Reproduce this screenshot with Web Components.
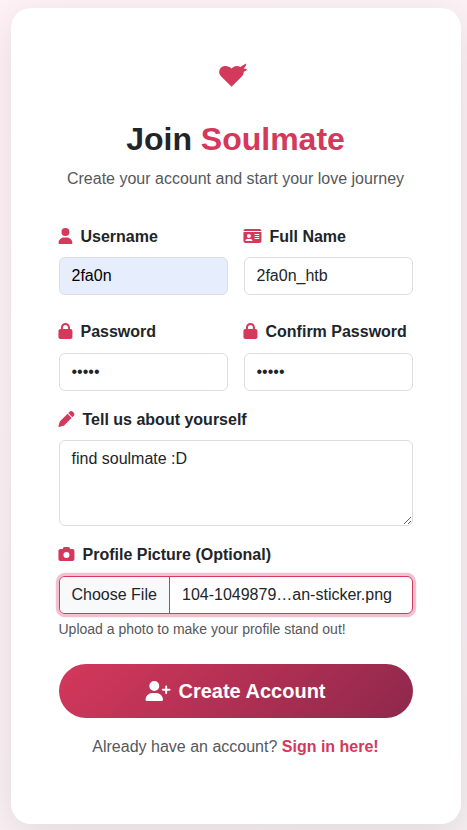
<!DOCTYPE html>
<html lang="en">
<head>
<meta charset="utf-8">
<title>Join Soulmate</title>
<style>
html{height:100%}
body{margin:0;min-height:100%;box-sizing:border-box;overflow:hidden;padding:8px 0 6px 10.5px;background:linear-gradient(135deg,#fff2f6 0%,#f7f0f3 100%);font:16px/24px "Liberation Sans",Arial,sans-serif;color:#212529;--pink:#d4385b}
</style>
</head>
<body>
<signup-card></signup-card>
<script>
const ICONS = {
  user: [448, 'M224 256A128 128 0 1 0 224 0a128 128 0 1 0 0 256zm-45.7 48C79.8 304 0 383.8 0 482.3C0 498.7 13.3 512 29.7 512l388.6 0c16.4 0 29.7-13.3 29.7-29.7C448 383.8 368.2 304 269.7 304l-91.4 0z'],
  card: [576, 'M0 96l576 0c0-35.3-28.7-64-64-64L64 32C28.7 32 0 60.7 0 96zm0 32L0 416c0 35.3 28.7 64 64 64l448 0c35.3 0 64-28.7 64-64l0-288L0 128zM64 405.3c0-29.5 23.9-53.3 53.3-53.3l117.3 0c29.5 0 53.3 23.9 53.3 53.3c0 5.9-4.8 10.7-10.7 10.7L74.7 416c-5.9 0-10.7-4.8-10.7-10.7zM176 192a64 64 0 1 1 0 128 64 64 0 1 1 0-128zm176 16c0-8.8 7.2-16 16-16l128 0c8.8 0 16 7.2 16 16s-7.2 16-16 16l-128 0c-8.8 0-16-7.2-16-16zm0 64c0-8.8 7.2-16 16-16l128 0c8.8 0 16 7.2 16 16s-7.2 16-16 16l-128 0c-8.8 0-16-7.2-16-16zm0 64c0-8.8 7.2-16 16-16l128 0c8.8 0 16 7.2 16 16s-7.2 16-16 16l-128 0c-8.8 0-16-7.2-16-16z'],
  lock: [448, 'M144 144l0 48 160 0 0-48c0-44.2-35.8-80-80-80s-80 35.8-80 80zM80 192l0-48C80 64.5 144.5 0 224 0s144 64.5 144 144l0 48 16 0c35.3 0 64 28.7 64 64l0 192c0 35.3-28.7 64-64 64L64 512c-35.3 0-64-28.7-64-64L0 256c0-35.3 28.7-64 64-64l16 0z'],
  pen: [512, 'M362.7 19.3L314.3 67.7 444.3 197.7l48.4-48.4c25-25 25-65.5 0-90.5L453.3 19.3c-25-25-65.5-25-90.5 0zm-71 71L58.6 323.5c-10.4 10.4-18 23.3-22.2 37.4L1 481.2C-1.5 489.7 .8 498.8 7 505s15.3 8.5 23.7 6.1l120.3-35.4c14.1-4.2 27-11.8 37.4-22.2L421.7 220.3 291.7 90.3z'],
  camera: [512, 'M149.1 64.8L138.7 96 64 96C28.7 96 0 124.7 0 160L0 416c0 35.3 28.7 64 64 64l384 0c35.3 0 64-28.7 64-64l0-256c0-35.3-28.7-64-64-64l-74.7 0L362.9 64.8C356.4 45.2 338.1 32 317.4 32L194.6 32c-20.7 0-39 13.2-45.5 32.8zM256 192a96 96 0 1 1 0 192 96 96 0 1 1 0-192z'],
  plus: [640, 'M96 128a128 128 0 1 1 256 0A128 128 0 1 1 96 128zM0 482.3C0 383.8 79.8 304 178.3 304l91.4 0C368.2 304 448 383.8 448 482.3c0 16.4-13.3 29.7-29.7 29.7L29.7 512C13.3 512 0 498.7 0 482.3zM504 312l0-64-64 0c-13.3 0-24-10.7-24-24s10.7-24 24-24l64 0 0-64c0-13.3 10.7-24 24-24s24 10.7 24 24l0 64 64 0c13.3 0 24 10.7 24 24s-10.7 24-24 24l-64 0 0 64c0 13.3-10.7 24-24 24s-24-10.7-24-24z']
};
const define = (name, html) => customElements.define(name, class extends HTMLElement {
  connectedCallback() {
    if (this.shadowRoot) return;
    const t = document.createElement('template');
    t.innerHTML = typeof html === 'function' ? html(this) : html;
    this.attachShadow({mode: 'open'}).append(t.content.cloneNode(true));
  }
});

define('form-icon', el => {
  const [w, d] = ICONS[el.getAttribute('name')];
  return `<style>:host{display:block;flex:none;height:1em;width:${w / 512}em}svg{display:block;width:100%;height:100%;fill:currentColor;overflow:visible}</style>
  <svg viewBox="0 0 ${w} 512" aria-hidden="true"><path transform="translate(14)" fill-rule="evenodd" d="${d}"/></svg>`;
});

define('brand-heart', `<style>:host{display:block;width:28px;height:24px}svg{display:block}</style>
<svg width="28" height="24" viewBox="0 0 28 24" fill="#d4385b" aria-hidden="true">
<path d="M12.6 23.8 2 13.3C.4 11.6 0 10.1.3 8 .7 5.3 3.1 3 6.2 3c2.7 0 4.7.9 6.4 2.6C14 3.9 15.7 3 17.8 3c1.3 0 2.6.3 3.7.9L22.7 3l3.5-2c.8-.4 1.4.2.9 1l-1.6 2.7-1 1 2.4.1c1 .1 1.1 1.2.4 1.7l-1.7 1-.9.2c.1 1.8-.4 3.2-1.7 4.6Z"/></svg>`);

define('field-label', el => `<style>:host{display:flex;align-items:center;gap:8px;height:24px;font-weight:700;white-space:nowrap}form-icon{color:var(--pink);margin:0 .5px 2px -.5px}</style>
<form-icon name="${el.getAttribute('icon')}"></form-icon><span><slot></slot></span>`);

define('text-field', el => {
  const v = el.getAttribute('value'), type = el.getAttribute('type') || 'text';
  const area = type === 'area';
  return `<style>:host{display:block}field-label{margin-bottom:var(--gap,8px)}
  input,textarea{display:block;box-sizing:border-box;width:100%;height:38px;margin:0;padding:6px 12px;border:1px solid #dcdde2;border-radius:6px;background:#fff;font:inherit;color:inherit;outline:0}
  textarea{height:86px;resize:vertical}
  :host([filled]) input{background:#e6edfd;color:#000}</style>
  <field-label icon="${el.getAttribute('icon')}"><slot></slot></field-label>
  ${area ? `<textarea>${v}</textarea>` : `<input type="${type}" value="${v}">`}`;
});

define('file-field', `<style>:host{display:block}field-label{margin-bottom:9px}
.box{display:flex;box-sizing:border-box;height:38px;border:1px solid var(--pink);border-radius:6px;box-shadow:0 0 0 3.2px #f0c1d0;overflow:hidden;background:#fff}
button{all:unset;box-sizing:border-box;width:110.5px;padding:6px 12px;border-right:1px solid var(--pink);background:#f8f9fa;white-space:nowrap}
.name{padding:6px 12px;white-space:nowrap}
.hint{margin-top:5px;font-size:14px;line-height:21px;color:#55585b}</style>
<field-label icon="camera"><slot></slot></field-label>
<div class="box"><button>Choose File</button><span class="name"><slot name="file"></slot></span></div>
<div class="hint"><slot name="hint"></slot></div>`);

define('primary-button', `<style>:host{display:block}form-icon{margin-bottom:1px}button{display:flex;align-items:center;justify-content:center;gap:8px;width:100%;height:54px;border:0;border-radius:27px;padding:0;background:linear-gradient(135deg,#d4385b,#8e284c);color:#fff;font:700 20px/30px "Liberation Sans",Arial,sans-serif}</style>
<button><form-icon name="plus"></form-icon><span><slot></slot></span></button>`);

define('signup-card', `<style>
:host{display:block;box-sizing:border-box;width:450px;height:816px;padding:55px 48px 0;border-radius:20px;background:#fff;box-shadow:0 10px 40px rgba(0,0,0,.1)}
header{display:flex;flex-direction:column;align-items:center;text-align:center}
brand-heart{margin-right:5px}
h1{margin:33px 0 9px;font-size:32px;line-height:38.4px;font-weight:700}
h1 span,a{color:var(--pink)}
p{margin:0;color:#55585b;text-align:center}
.row{display:grid;grid-template-columns:169px 169px;gap:16px}
.a{margin-top:33.6px}.b{margin-top:25px}.b text-field{--gap:9px}.c{margin-top:17px}.d{margin-top:17px}
primary-button{margin-top:24px}
footer{margin-top:17px}
a{font-weight:700;text-decoration:none}
</style>
<header><brand-heart></brand-heart><h1>Join <span>Soulmate</span></h1><p>Create your account and start your love journey</p></header>
<div class="row a"><text-field icon="user" value="2fa0n" filled>Username</text-field><text-field icon="card" value="2fa0n_htb">Full Name</text-field></div>
<div class="row b"><text-field icon="lock" type="password" value="abcde">Password</text-field><text-field icon="lock" type="password" value="abcde">Confirm Password</text-field></div>
<text-field class="c" icon="pen" type="area" value="find soulmate :D">Tell us about yourself</text-field>
<file-field class="d">Profile Picture (Optional)<span slot="file">104-1049879…an-sticker.png</span><span slot="hint">Upload a photo to make your profile stand out!</span></file-field>
<primary-button>Create Account</primary-button>
<footer><p>Already have an account? <a>Sign in here!</a></p></footer>`);
</script>
</body>
</html>
